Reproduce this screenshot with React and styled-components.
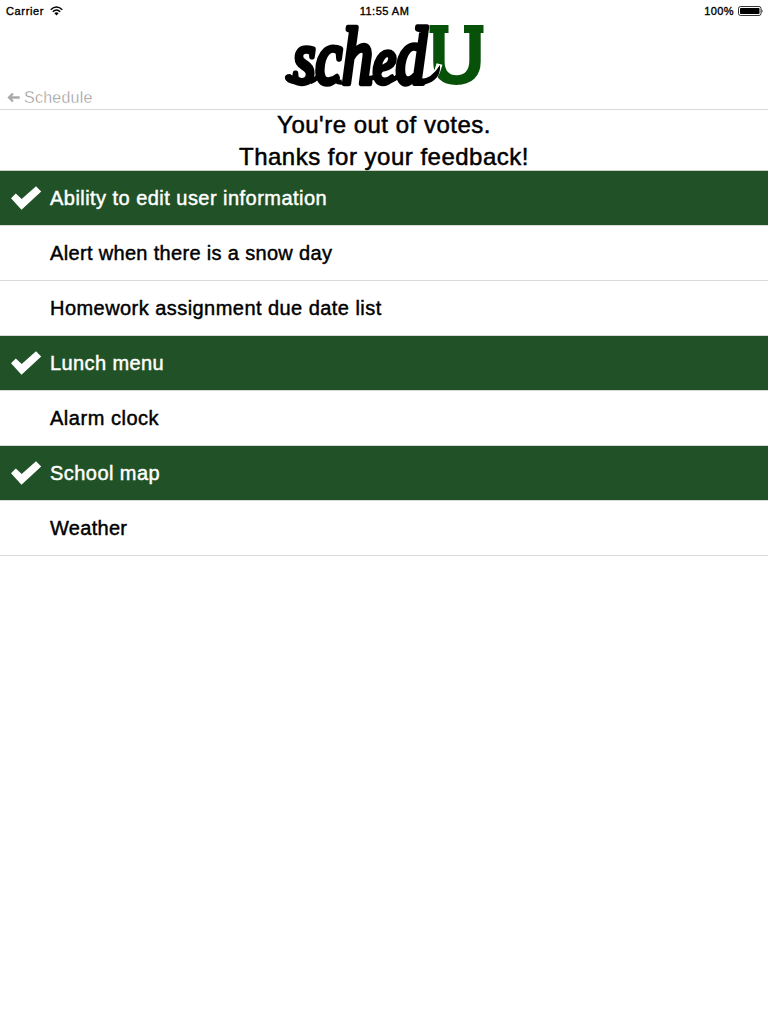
import React from 'react';
import styled, { createGlobalStyle } from 'styled-components';

const GlobalStyle = createGlobalStyle`
  * { box-sizing: border-box; }
  body {
    margin: 0;
    background: #fff;
    color: #000;
    font-family: "Liberation Sans", Arial, sans-serif;
  }
`;

const Screen = styled.main`
  display: flex;
  flex-direction: column;
  min-height: 1024px;
`;

const Header = styled.header`
  display: flex;
  flex-direction: column;
  height: 110px;
  border-bottom: 1px solid #d9d9d9;
`;

const StatusBar = styled.div`
  display: grid;
  grid-template-columns: 1fr auto 1fr;
  align-items: center;
  height: 22px;
  padding: 0 5px 0 6px;
  font-size: 11px;
  line-height: 22px;
  -webkit-text-stroke: 0.35px #000;
`;

const StatusGroup = styled.div`
  display: flex;
  align-items: center;
  justify-content: ${(p) => (p.$end ? 'flex-end' : 'flex-start')};
  gap: ${(p) => (p.$end ? 4 : 5.5)}px;
  letter-spacing: ${(p) => p.$tracking || 0}px;
`;

const LogoRow = styled.div`
  display: flex;
  justify-content: center;
  height: 66px;
`;

const LogoMark = styled.svg`
  overflow: visible;
`;

const BackLink = styled.a`
  display: flex;
  align-items: center;
  gap: 4px;
  height: 20px;
  padding: 0 7px;
  font-size: 16px;
  line-height: 20px;
  letter-spacing: 0.25px;
`;

const BackLabel = styled.span`
  -webkit-text-stroke: 0.45px #fff;
  color: #8c8c8c;
`;

const Message = styled.h1`
  display: flex;
  flex-direction: column;
  margin: 0;
  height: 61px;
  border-bottom: 1px solid #c9cfc9;
  font-size: 24px;
  font-weight: 400;
  line-height: 32px;
  text-align: center;
  -webkit-text-stroke: 0.5px #000;
`;

const MessageLine = styled.span`
  height: 32px;
  letter-spacing: 0.5px;
  &:first-child { margin-top: -1px; }
`;

const FeatureList = styled.ul`
  margin: 0;
  padding: 0;
  list-style: none;
`;

const FeatureRow = styled.li`
  display: flex;
  align-items: center;
  height: 55px;
  border-bottom: 1px solid #d9d9d9;
  background: ${(p) => (p.$voted ? '#215227' : '#fff')};
  color: ${(p) => (p.$voted ? '#fff' : '#000')};
`;

const CheckSlot = styled.span`
  display: flex;
  width: 50px;
  padding-left: 11px;
`;

const FeatureName = styled.span`
  font-size: 20px;
  line-height: 24px;
  letter-spacing: ${(p) => p.$tracking}px;
  -webkit-text-stroke: 0.45px currentColor;
`;

const Wifi = () => (
  <svg width="13" height="10" viewBox="0 0 13 10" fill="none" stroke="#000" strokeWidth="1.5">
    <path d="M0.7 3.7Q6.5-1.7 12.3 3.7M2.8 5.8Q6.5 2.3 10.2 5.8" />
    <path d="M4.4 7.3Q6.5 5.4 8.6 7.3L6.5 9.5Z" fill="#000" stroke="none" />
  </svg>
);

const Battery = () => (
  <svg width="25" height="10" viewBox="0 0 25 10">
    <rect x="0.5" y="0.5" width="22.5" height="9" rx="2" fill="none" stroke="#000" strokeWidth="0.8" />
    <rect x="2" y="2" width="19.5" height="6" rx="0.8" />
    <path d="M23.7 3.2Q25.3 5 23.7 6.8Z" />
  </svg>
);

const BackArrow = () => (
  <svg width="13" height="10" viewBox="0 0 13 10" fill="none" stroke="#aaa" strokeWidth="2.3">
    <path d="M6 0.5L2 4.5L6 8.5M2 4.5H12.7" />
  </svg>
);

const Check = () => (
  <svg width="31" height="24" viewBox="0 0 31 24">
    <path d="M0 12.3L4.8 7.5L10.7 13L25 0.2L30.2 5.4L10.5 23.8Z" fill="#fff" />
  </svg>
);

const Logo = () => (
  <LogoMark width="200" height="66" viewBox="0 0 200 66" role="img" aria-label="schedU">
    <g fill="#085108">
      <text
        x="144.6" y="61.5" fontFamily="Liberation Sans" fontWeight="700" fontSize="85"
        textLength="57" lengthAdjust="spacingAndGlyphs"
      >U</text>
      <rect x="145.5" y="3" width="19" height="8" />
      <rect x="180" y="3" width="19.5" height="8" />
    </g>
    <path d="M144 61Q152 56 155.5 42" fill="none" stroke="#fff" strokeWidth="6" />
    <text
      x="9" y="60.5" fontFamily="Liberation Serif" fontStyle="italic" fontSize="80"
      textLength="134" lengthAdjust="spacingAndGlyphs"
      stroke="#000" strokeWidth="5.5" strokeLinejoin="round"
    >
      <tspan fontSize="74">s</tspan><tspan fontSize="76">c</tspan><tspan>h</tspan><tspan fontSize="66">e</tspan><tspan>d</tspan>
    </text>
    <path d="M130 56Q145 61 156 43Q157 56 145 61Q136 65 130 62Z" />
    <path d="M1 57Q0 52 6 52L14 57Q14 63 9 62Q3 61 1 57Z" />
    <path d="M26 60Q34 57 38 49M58 60Q53 61 49 56M83 56Q91 58 97 48M106 59Q114 56 117 50" fill="none" stroke="#000" strokeWidth="5" />
  </LogoMark>
);

const features = [
  { name: 'Ability to edit user information', voted: true, tracking: 0.46 },
  { name: 'Alert when there is a snow day', tracking: 0.33 },
  { name: 'Homework assignment due date list', tracking: 0.45 },
  { name: 'Lunch menu', voted: true, tracking: 0.4 },
  { name: 'Alarm clock', tracking: 0.52 },
  { name: 'School map', voted: true, tracking: 0.45 },
  { name: 'Weather', tracking: 0.3 },
];

export default function App() {
  return (
    <Screen>
      <GlobalStyle />
      <Header>
        <StatusBar>
          <StatusGroup $tracking={0.65}>Carrier <Wifi /></StatusGroup>
          <StatusGroup $tracking={0.5}>11:55 AM</StatusGroup>
          <StatusGroup $end $tracking={0.4}>100% <Battery /></StatusGroup>
        </StatusBar>
        <LogoRow><Logo /></LogoRow>
        <BackLink><BackArrow /><BackLabel>Schedule</BackLabel></BackLink>
      </Header>
      <Message>
        <MessageLine>You're out of votes.</MessageLine>
        <MessageLine>Thanks for your feedback!</MessageLine>
      </Message>
      <FeatureList>
        {features.map((f) => (
          <FeatureRow key={f.name} $voted={f.voted}>
            <CheckSlot>{f.voted && <Check />}</CheckSlot>
            <FeatureName $tracking={f.tracking}>{f.name}</FeatureName>
          </FeatureRow>
        ))}
      </FeatureList>
    </Screen>
  );
}
